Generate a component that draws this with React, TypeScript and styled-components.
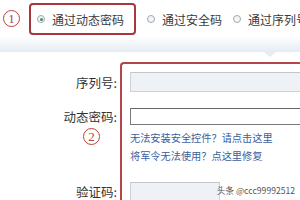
import React from 'react';
import styled, { createGlobalStyle } from 'styled-components';

const Global = createGlobalStyle`
  html, body {
    margin: 0;
    padding: 0;
    background: #fff;
  }
  body {
    width: 300px;
    height: 200px;
    overflow: hidden;
    font-family: "Noto Sans CJK SC", "Liberation Sans", sans-serif;
  }
`;

const Page = styled.div`
  width: 300px;
  height: 200px;
  overflow: hidden;
  position: relative;
  background: #fff;
`;

const Tabs = styled.div`
  display: flex;
  align-items: flex-start;
  height: 36px;
  padding: 3px 0 0 3px;
  box-sizing: border-box;
  white-space: nowrap;
`;

const Mark = styled.span<{ $top?: number }>`
  display: inline-flex;
  align-items: center;
  justify-content: center;
  width: 17px;
  height: 17px;
  margin-top: ${p => p.$top ?? 0}px;
  border: 1.3px solid #b8453f;
  border-radius: 50%;
  color: #b8453f;
  font-family: "Liberation Serif", serif;
  font-size: 13px;
  line-height: 1;
  box-sizing: border-box;
  flex-shrink: 0;
`;

const Choice = styled.label<{ $boxed?: boolean }>`
  display: flex;
  align-items: center;
  gap: 7px;
  height: 32px;
  padding: 0 ${p => (p.$boxed ? 10 : 0)}px 0 ${p => (p.$boxed ? 6 : 0)}px;
  margin-left: ${p => (p.$boxed ? 9 : 0)}px;
  margin-right: ${p => (p.$boxed ? 9 : 7)}px;
  border: 2px solid ${p => (p.$boxed ? '#a8363a' : 'transparent')};
  border-radius: 4px;
  box-sizing: border-box;
  font-size: 12px;
  color: #3a3a3a;
`;

const Radio = styled.span<{ $on?: boolean }>`
  width: 8px;
  height: 8px;
  border: 1px solid #a0a8b2;
  border-radius: 50%;
  background: #f3f5f7;
  position: relative;
  box-sizing: border-box;
  flex-shrink: 0;
  &::after {
    content: '';
    display: ${p => (p.$on ? 'block' : 'none')};
    position: absolute;
    left: 1.5px;
    top: 1.5px;
    width: 3px;
    height: 3px;
    border-radius: 50%;
    background: #3f9a3a;
  }
`;

const Strip = styled.div`
  height: 16px;
  background: linear-gradient(#ffffff, #e5ecf3);
  position: relative;
  &::after {
    content: '';
    position: absolute;
    left: 264px;
    bottom: -5px;
    border-left: 6px solid transparent;
    border-right: 6px solid transparent;
    border-top: 5px solid #e5ecf3;
  }
`;

const Form = styled.div`
  display: flex;
  margin-top: 10px;
`;

const Labels = styled.div`
  width: 120px;
  display: flex;
  flex-direction: column;
  align-items: flex-end;
  padding: 10px 3px 0 0;
  box-sizing: border-box;
`;

const Label = styled.div<{ $h: number; $gap?: number }>`
  height: ${p => p.$h}px;
  margin-top: ${p => p.$gap ?? 0}px;
  display: flex;
  align-items: center;
  font-size: 12.5px;
  color: #333;
`;

const Step = styled.div`
  width: 100%;
  display: flex;
  padding-left: 83px;
  box-sizing: border-box;
`;

const Panel = styled.div`
  flex: 1;
  border: 2px solid #b2464a;
  border-right: none;
  border-bottom: none;
  border-radius: 4px 0 0 0;
  padding: 8px 0 0 8px;
  height: 160px;
`;

const Input = styled.div<{ $grey?: boolean; $w?: number; $h: number; $gap?: number }>`
  height: ${p => p.$h}px;
  width: ${p => (p.$w ? `${p.$w}px` : 'calc(100% + 4px)')};
  margin-top: ${p => p.$gap ?? 0}px;
  box-sizing: border-box;
  border: 1px solid ${p => (p.$grey ? '#cdd1d7' : '#7a7a7a')};
  border-top-color: ${p => (p.$grey ? '#c3c7cd' : '#666')};
  background: ${p => (p.$grey ? '#eef1f5' : '#fff')};
`;

const Link = styled.a<{ $gap?: number }>`
  display: block;
  margin-top: ${p => p.$gap ?? 0}px;
  height: 16px;
  line-height: 16px;
  font-size: 10.2px;
  color: #3b5e9e;
  text-decoration: none;
  white-space: nowrap;
`;

const Watermark = styled.span`
  position: absolute;
  right: 5px;
  bottom: 4px;
  font-size: 8.6px;
  color: #555;
  text-shadow: 0 0 2px #fff;
`;

export default function App() {
  return (
    <Page>
      <Global />
      <Tabs>
        <Mark $top={7}>1</Mark>
        <Choice $boxed>
          <Radio $on />
          通过动态密码
        </Choice>
        <Choice>
          <Radio />
          通过安全码
        </Choice>
        <Choice>
          <Radio />
          通过序列号
        </Choice>
      </Tabs>
      <Strip />
      <Form>
        <Labels>
          <Label $h={20}>序列号:</Label>
          <Label $h={17} $gap={16}>动态密码:</Label>
          <Step>
            <Mark $top={3}>2</Mark>
          </Step>
          <Label $h={18} $gap={37}>验证码:</Label>
        </Labels>
        <Panel>
          <Input $grey $h={20} />
          <Input $h={17} $gap={16} />
          <Link $gap={5}>无法安装安全控件？请点击这里</Link>
          <Link $gap={2}>将军令无法使用？点这里修复</Link>
          <Input $grey $w={90} $h={20} $gap={18} />
        </Panel>
      </Form>
      <Watermark>头条 @ccc99992512</Watermark>
    </Page>
  );
}
